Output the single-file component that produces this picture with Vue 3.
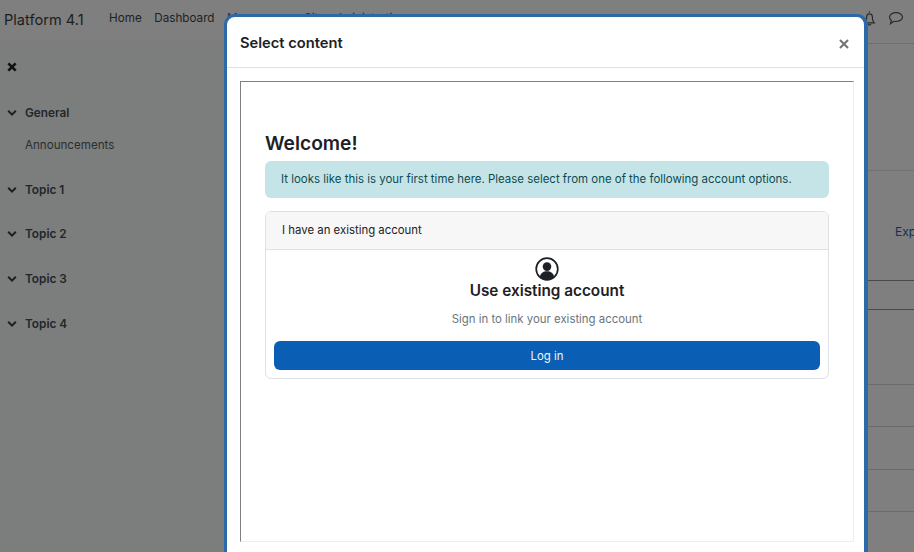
<script setup>
const navLinks = ['Home', 'Dashboard', 'My courses', 'Site administration']
const sections = [
  { name: 'General', items: ['Announcements'] },
  { name: 'Topic 1', items: [] },
  { name: 'Topic 2', items: [] },
  { name: 'Topic 3', items: [] },
  { name: 'Topic 4', items: [] },
]
const rows = [
  { h: 127, border: '#727272' },
  { h: 110, border: '#4a4a4a' },
  { h: 29, border: '#4a4a4a' },
  { h: 75, border: '#6b6b6b' },
  { h: 42, border: '#6b6b6b' },
  { h: 43, border: '#6b6b6b' },
  { h: 42, border: '#6b6b6b' },
]
</script>

<template>
  <div class="page">
    <header class="navbar">
      <span class="brand">Platform 4.1</span>
      <nav class="nav">
        <a v-for="l in navLinks" :key="l" class="nav-link" :class="{ dim: l === 'My courses' || l === 'Site administration' }">{{ l }}</a>
      </nav>
      <div class="nav-icons">
        <svg width="15" height="17" viewBox="0 0 15 17" fill="none" stroke="#2b2b2b" stroke-width="1.2">
          <path d="M7.5 1.2v1.2M3.6 11.6c.8-1.2 1-2.6 1-4.4 0-2 1.2-3.4 2.9-3.4s2.900 1.400 2.900 3.400c0 1.800.2 3.200 1 4.400l.9 1.200H2.700z" />
          <path d="M6 14.200c.4.800 2.600.8 3 0" />
        </svg>
        <svg width="16" height="15" viewBox="0 0 16 15" fill="none" stroke="#2b2b2b" stroke-width="1.2">
          <path d="M8 1.700c3.600 0 6.500 1.900 6.500 4.400S11.600 10.500 8 10.500c-.7 0-1.300-.1-1.900-.2L2.500 12.600l.9-3.200C2.200 8.600 1.500 7.400 1.500 6.100 1.500 3.600 4.400 1.700 8 1.700z" />
        </svg>
      </div>
    </header>

    <div class="body">
      <aside class="sidebar">
        <svg class="close-x" width="10" height="10" viewBox="0 0 10 10" stroke="#111" stroke-width="2.600">
          <path d="M1.300 1.300l7.400 7.400M8.700 1.300L1.300 8.700" />
        </svg>
        <div class="sections">
          <section v-for="s in sections" :key="s.name" class="section">
            <div class="section-head">
              <svg width="10" height="8" viewBox="0 0 10 8" fill="none" stroke="#1c1f22" stroke-width="2">
                <path d="M1.200 1.800L5 5.600l3.800-3.800" />
              </svg>
              <span>{{ s.name }}</span>
            </div>
            <div v-for="i in s.items" :key="i" class="section-item">{{ i }}</div>
          </section>
        </div>
      </aside>
      <main class="content">
        <a class="exp">Expand all</a>
        <div v-for="(r, i) in rows" :key="i" class="row" :style="{ height: r.h + 'px', borderColor: r.border }"></div>
      </main>
    </div>

    <div class="modal">
      <div class="modal-head">
        <h5>Select content</h5>
        <svg class="modal-close" width="10" height="10" viewBox="0 0 10 10" stroke="#777" stroke-width="2.200">
          <path d="M1 1l8 8M9 1L1 9" />
        </svg>
      </div>
      <div class="modal-body">
        <div class="frame">
          <h3 class="welcome">Welcome!</h3>
          <div class="alert">It looks like this is your first time here. Please select from one of the following account options.</div>
          <div class="card">
            <div class="card-head">I have an existing account</div>
            <div class="card-body">
              <svg class="avatar" width="24" height="24" viewBox="0 0 24 24">
                <circle cx="12" cy="12" r="10.800" fill="#fff" stroke="#1d2125" stroke-width="1.700" />
                <circle cx="12" cy="9.600" r="4.300" fill="#1d2125" />
                <path d="M4.900 19.800c.6-3.800 3.400-5.600 7.100-5.600s6.500 1.800 7.100 5.600A10.800 10.800 0 0 1 12 22.800a10.800 10.800 0 0 1-7.100-3z" fill="#1d2125" />
              </svg>
              <div class="use">Use existing account</div>
              <div class="sign">Sign in to link your existing account</div>
              <button class="login">Log in</button>
            </div>
          </div>
        </div>
      </div>
    </div>
  </div>
</template>

<style>
html, body { margin: 0; overflow: hidden; }
</style>

<style scoped>
.page {
  position: relative;
  width: 914px;
  height: 552px;
  overflow: hidden;
  background: #7f7f7f;
  font-family: Inter, "Liberation Sans", sans-serif;
  color: #1c1f22;
}
.navbar {
  border-bottom: 1px solid #6f6f6f;
  display: flex;
  align-items: center;
  padding-left: 4px;
  padding-bottom: 3px;
  margin-bottom: -3px;
  box-sizing: border-box;
  height: 44px;
}
.brand { font-size: 14.6px; color: #1d1d1d; width: 105px; }
.nav { display: flex; gap: 12.5px; font-size: 11.7px; margin-top: -5px; }
.nav-link { color: #1f1f1f; }
.nav-link.dim { color: #1f2f45; }
.nav-icons { margin-left: auto; display: flex; gap: 11px; align-items: center; padding-right: 10px; margin-top: -3px; }
.body { display: flex; height: 511px; }
.sidebar { width: 224px; background: #7c7e7d; padding: 21px 0 0 7px; box-sizing: border-box; flex: none; }
.close-x { display: block; }
.sections { margin-top: 31px; display: flex; flex-direction: column; }
.section { padding-bottom: 25.7px; }
.section-head { display: flex; align-items: center; gap: 8px; font-size: 11.8px; font-weight: 600; color: #23262a; height: 19px; }
.section-item { font-size: 11.6px; color: #2b2e31; margin: 14px 0 -0.4px 18px; height: 19px; line-height: 19px; }
.content { flex: 1; position: relative; padding-top: 3px; }
.exp { position: absolute; left: 671px; top: 183px; font-size: 12px; color: #123056; white-space: nowrap; }
.row { border-bottom: 1px solid; box-sizing: border-box; }
.modal {
  position: absolute;
  left: 224px;
  top: 14px;
  width: 644px;
  height: 560px;
  box-sizing: border-box;
  border: 3px solid #2c69a8;
  border-right-width: 4px;
  border-radius: 11px;
  background: #fff;
}
.modal-head {
  height: 51px;
  box-sizing: border-box;
  border-bottom: 1px solid #dee2e6;
  display: flex;
  align-items: center;
  justify-content: space-between;
  padding: 0 15px 0 13px;
}
.modal-head h5 { margin: 1px 0 0; font-size: 14.7px; font-weight: 600; color: #1d2125; }
.modal-close { margin-top: 4px; }
.modal-body { padding: 13px 10px 0 13px; }
.frame {
  height: 461px;
  box-sizing: border-box;
  border-style: solid;
  border-width: 1px;
  border-color: #808080 #eeeeee #eeeeee #808080;
  padding: 49px 24px 0;
  background: #fff;
}
.welcome { margin: 0; font-size: 19.2px; line-height: 24px; font-weight: 600; color: #1d2125; }
.alert {
  margin-top: 6px;
  background: #c5e4e7;
  border-radius: 6px;
  height: 37px;
  line-height: 37px;
  padding-left: 16px;
  font-size: 11.45px;
  color: #0f4a50;
  white-space: nowrap;
}
.card { margin-top: 13px; border: 1px solid #dee2e6; border-radius: 6px; overflow: hidden; }
.card-head { background: #f7f7f7; border-bottom: 1px solid #dee2e6; height: 37px; line-height: 36px; padding-left: 16px; font-size: 11.4px; color: #1d2125; }
.card-body { display: flex; flex-direction: column; align-items: center; padding: 7px 8px 8px; }
.avatar { display: block; }
.use { font-size: 15.3px; font-weight: 600; line-height: 18px; margin-top: 1px; color: #1d2125; }
.sign { font-size: 11.4px; color: #6a737b; margin-top: 10px; line-height: 18px; }
.login {
  margin-top: 13px;
  width: 100%;
  height: 29px;
  border: 0;
  border-radius: 6px;
  background: #0a5fb4;
  color: #f1f5fb;
  font: 11.4px Inter, "Liberation Sans", sans-serif;
}
</style>
